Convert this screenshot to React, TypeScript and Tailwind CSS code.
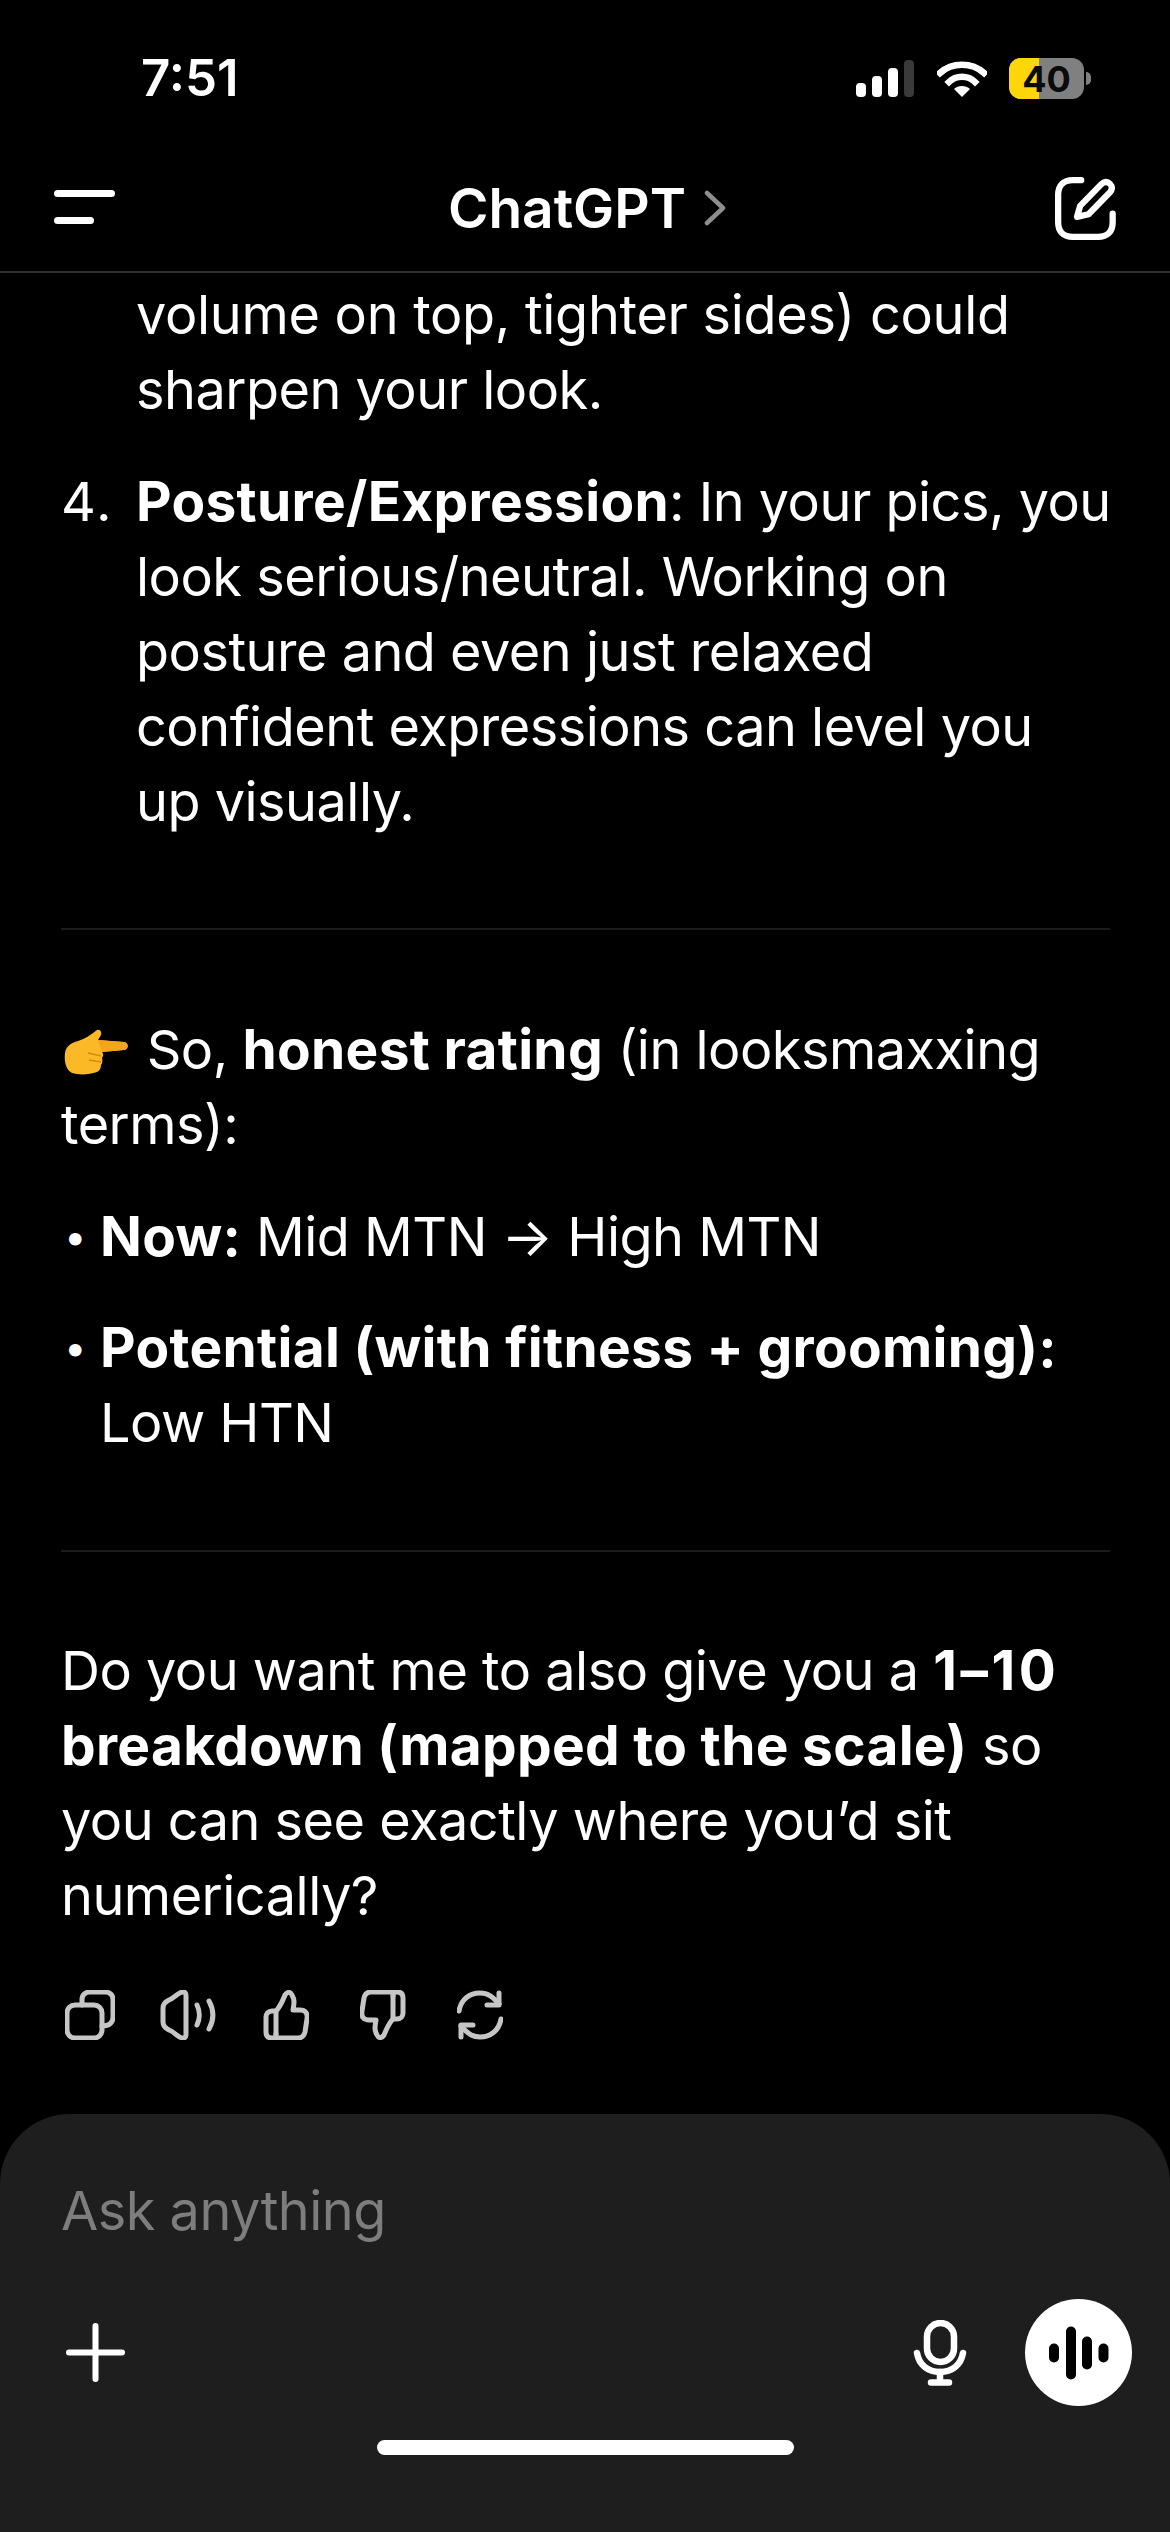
const white = "#ffffff";

function Signal() {
  return (
    <svg width="58" height="37" viewBox="0 0 58 37">
      <rect x="0" y="23" width="10" height="14" rx="4" fill={white} />
      <rect x="16" y="16" width="10" height="21" rx="4" fill={white} />
      <rect x="32" y="8" width="10" height="29" rx="4" fill={white} />
      <rect x="48" y="0" width="10" height="37" rx="4" fill="#3a3a3a" />
    </svg>
  );
}

function Wifi() {
  return (
    <svg width="50" height="37" viewBox="0 0 50 37" fill="none">
      <path d="M3 13C15 2 35 2 47 13" stroke={white} strokeWidth="6.5" strokeLinecap="square" />
      <path d="M12 22C19 15 31 15 38 22" stroke={white} strokeWidth="6.5" strokeLinecap="square" />
      <path d="M17 29C21 25 29 25 33 29L25 37Z" fill={white} />
    </svg>
  );
}

function Battery() {
  return (
    <div className="relative ml-[22px] flex h-[41px] w-[75px] items-center justify-center overflow-hidden rounded-[12px] bg-[#808080]">
      <div className="absolute inset-y-0 left-0 w-[30px] bg-[#ffd60a]" />
      <span className="relative text-[36px] leading-none font-bold text-[#0a0a0a]">40</span>
    </div>
  );
}

function Compose() {
  return (
    <svg width="65" height="65" viewBox="0 0 62 62" fill="none" stroke={white} strokeWidth="6" strokeLinecap="round" strokeLinejoin="round">
      <path d="M25 4H17C8 4 3 9 3 18V44C3 53 8 58 17 58H41C50 58 55 53 55 44V36" />
      <path d="M21 39L24 28.500L44 8C47 5 50 5 52.500 7.500C55 10 55 13 52 16L32 36.500Z" />
    </svg>
  );
}

function ActionIcons() {
  const stroke = {
    fill: "none",
    stroke: "#c6c6c6",
    strokeWidth: 5,
    strokeLinecap: "round" as const,
    strokeLinejoin: "round" as const,
  };
  return (
    <div className="mt-[58px] flex h-[48px] items-center pl-[4px]">
      <svg width="50" height="50" viewBox="0 0 50 50" {...stroke}>
        <rect x="2" y="15" width="35" height="33" rx="8" />
        <path d="M17 15V10C17 5 20 2 25 2H40C45 2 48 5 48 10V27C48 32 45 36 37 36" />
      </svg>
      <svg className="ml-[45px]" width="56" height="50" viewBox="0 0 56 50" {...stroke}>
        <path d="M3 18C3 14 5 12 9 10C15 8 18 2 23 2C26 2 26 4 26 7V43C26 46 26 48 23 48C18 48 15 42 9 40C5 38 3 36 3 32Z" />
        <path d="M37 15C40 21 40 29 37 35" />
        <path d="M49 11C54 20 54 30 49 39" />
      </svg>
      <svg className="ml-[47px]" width="46" height="50" viewBox="0 0 46 50" {...stroke}>
        <path d="M14 48H35C39 48 41 46 42 42L44 29C45 23 42 20 37 20H30C31 14 32 10 29 5C27 1 24 2 22 5C20 10 17 17 13 21V44" />
        <path d="M13 21H9C5 21 3 24 3 27V42C3 46 5 48 9 48H14C11 48 13 46 13 44" />
      </svg>
      <svg className="ml-[51px]" width="46" height="50" viewBox="0 0 46 50" {...stroke}>
        <path d="M32 2H11C7 2 5 4 4 8L2 21C1 27 4 30 9 30H16C15 36 14 40 17 45C19 49 22 48 24 45C26 40 29 33 33 29V6" />
        <path d="M33 29H37C41 29 43 26 43 23V8C43 4 41 2 37 2H32C35 2 33 4 33 6" />
      </svg>
      <svg className="ml-[51px]" width="46" height="50" viewBox="0 0 46 50" {...stroke}>
        <path d="M2 21C4 9 13 3 23 3C31 3 36 7 42 14" />
        <path d="M42 3V15H30" />
        <path d="M44 29C42 41 33 47 23 47C15 47 10 43 4 36" />
        <path d="M4 47V35H16" />
      </svg>
    </div>
  );
}

function PointingHand() {
  return (
    <svg className="mr-[4px] ml-[3px] inline-block align-[-6px]" width="64" height="46" viewBox="0 0 64 46">
      <path d="M1 24C2 17 7 14 14 12C20 10 27 6 33 1C36 0 38 3 37 6L34 11L60 13C65 14 65 20 60 21L38 23C40 25 39 28 38 29C39 32 38 35 37 36C37 40 35 42 33 43C25 46 14 46 8 44C2 41 0 33 1 24Z" fill="#fbb827" />
      <path d="M34 11L60 13C65 14 65 20 60 21L38 23" fill="#f3a51d" />
      <path d="M24 24L37 27M25 31L37 33" stroke="#d98a12" strokeWidth="1.500" fill="none" />
    </svg>
  );
}

function Rule({ className }: { className: string }) {
  return <div className={`h-[2px] bg-[#1c1c1c] ${className}`} />;
}

function Bold({ children }: { children: string }) {
  return <strong className="text-[55px] font-bold tracking-[0.3px]">{children}</strong>;
}

export default function App() {
  return (
    <div className="flex h-[2532px] w-[1170px] flex-col overflow-hidden bg-black text-white" style={{ fontFamily: "Inter, 'Liberation Sans', sans-serif" }}>
      {/* status bar */}
      <div className="flex h-[156px] shrink-0 items-start justify-between pt-[52px] pr-[79px] pl-[141px]">
        <span className="text-[51px] leading-[52px] font-semibold">7:51</span>
        <div className="flex items-center pt-[6px]">
          <Signal />
          <div className="ml-[23px]">
            <Wifi />
          </div>
          <Battery />
          <div className="ml-[2px] h-[13px] w-[5px] rounded-r-full bg-[#808080]" />
        </div>
      </div>

      {/* nav */}
      <div className="flex h-[117px] shrink-0 items-start justify-between border-b-2 border-[#2e2e2e] pr-[50px] pl-[54px]">
        <div className="flex w-[65px] flex-col gap-[20px] pt-[34px]">
          <div className="h-[7px] w-[61px] rounded-full bg-white" />
          <div className="h-[7px] w-[40px] rounded-full bg-white" />
        </div>
        <div className="flex items-center gap-[18px] pt-[20px]">
          <span className="text-[55px] leading-[64px] font-semibold">ChatGPT</span>
          <svg width="22" height="36" viewBox="0 0 22 36" fill="none" stroke="#8e8e8e" strokeWidth="4.500" strokeLinecap="round" strokeLinejoin="round">
            <path d="M3 3L19 18L3 33" />
          </svg>
        </div>
        <div className="pt-[20px]">
          <Compose />
        </div>
      </div>

      {/* messages */}
      <div className="flex-1 overflow-hidden pt-[4px] pl-[61px] text-[54px] leading-[75px] tracking-[-0.5px]">
        <div className="pl-[75px]">
          <span className="tracking-[-0.3px]">volume on top, tighter sides) could</span>
          <br />
          sharpen your look.
        </div>

        <div className="mt-[37px] flex">
          <span className="w-[75px] shrink-0 tracking-[2px]">4.</span>
          <div className="w-[985px]">
            <Bold>Posture/Expression</Bold>: In your pics, you
            <br />
            look serious/neutral. Working on
            <br />
            posture and even just relaxed
            <br />
            confident expressions can level you
            <br />
            up visually.
          </div>
        </div>

        <Rule className="mt-[89px] mb-[82px] w-[1049px]" />

        <div>
          <PointingHand /> So, <Bold>honest rating</Bold> (in looksmaxxing
          <br />
          terms):
        </div>

        <div className="mt-[37px] flex">
          <span className="w-[39px] shrink-0 pl-[3px] text-[40px]">•</span>
          <div>
            <Bold>Now:</Bold> Mid MTN → High MTN
          </div>
        </div>

        <div className="mt-[36px] flex">
          <span className="w-[39px] shrink-0 pl-[3px] text-[40px]">•</span>
          <div>
            <Bold>Potential (with fitness + grooming):</Bold>
            <br />
            Low HTN
          </div>
        </div>

        <Rule className="mt-[90px] mb-[81px] w-[1049px]" />

        <div>
          Do you want me to also give you a <strong className="text-[55px] font-bold tracking-[3.5px]">1–10</strong>
          <br />
          <Bold>breakdown (mapped to the scale)</Bold> so
          <br />
          you can see exactly where you’d sit
          <br />
          numerically?
        </div>

        <ActionIcons />
      </div>

      {/* composer */}
      <div className="flex h-[418px] shrink-0 flex-col rounded-t-[70px] bg-[#1e1e1e]">
        <div className="pt-[59px] pl-[61px] text-[54px] leading-[75px] tracking-[-0.5px] text-[#7d7d7d]">Ask anything</div>
        <div className="mt-[51px] flex h-[107px] items-center pr-[38px] pl-[66px]">
          <svg width="59" height="59" viewBox="0 0 59 59" stroke={white} strokeWidth="6" strokeLinecap="round">
            <path d="M29.500 3V56M3 29.500H56" />
          </svg>
          <svg className="mr-[58px] ml-auto" width="54" height="66" viewBox="0 0 54 66" fill="none" stroke={white} strokeWidth="6.500" strokeLinecap="round">
            <rect x="14" y="3" width="27" height="39" rx="13.500" />
            <path d="M4 33C6 45 15 52 27 52C39 52 48 45 50 33" />
            <path d="M27 52V62M18 62.500H36" />
          </svg>
          <div className="flex h-[107px] w-[107px] items-center justify-center rounded-full bg-white">
            <svg width="60" height="54" viewBox="0 0 60 54" stroke="#000" strokeWidth="10" strokeLinecap="round">
              <path d="M5 22.500V31.500M22 5.500V48.500M38 15.500V38.500M54.500 22.500V31.500" />
            </svg>
          </div>
        </div>
        <div className="mt-[34px] flex justify-center">
          <div className="h-[15px] w-[417px] rounded-full bg-white" />
        </div>
      </div>
    </div>
  );
}
